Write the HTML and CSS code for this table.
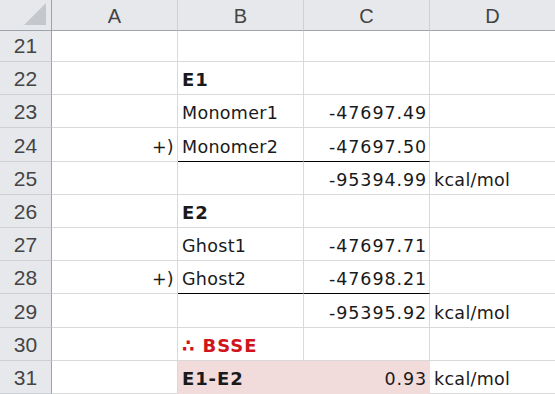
FILE: index.html
```html
<!DOCTYPE html>
<html>
<head>
<meta charset="utf-8">
<link rel="stylesheet" href="styles.css">
</head>
<body>
<div class="sheet">
  <div class="corner"><span class="tri"></span></div>
  <div class="colh">A</div>
  <div class="colh">B</div>
  <div class="colh">C</div>
  <div class="colh">D</div>

  <div class="rowh">21</div><div class="c"></div><div class="c"></div><div class="c"></div><div class="c"></div>

  <div class="rowh">22</div><div class="c"></div><div class="c b">E1</div><div class="c"></div><div class="c"></div>

  <div class="rowh">23</div><div class="c"></div><div class="c">Monomer1</div><div class="c r num">-47697.49</div><div class="c"></div>

  <div class="rowh">24</div><div class="c r">+)</div><div class="c ul">Monomer2</div><div class="c r num ul">-47697.50</div><div class="c"></div>

  <div class="rowh">25</div><div class="c"></div><div class="c"></div><div class="c r num">-95394.99</div><div class="c">kcal/mol</div>

  <div class="rowh">26</div><div class="c"></div><div class="c b">E2</div><div class="c"></div><div class="c"></div>

  <div class="rowh">27</div><div class="c"></div><div class="c">Ghost1</div><div class="c r num">-47697.71</div><div class="c"></div>

  <div class="rowh">28</div><div class="c r">+)</div><div class="c ul">Ghost2</div><div class="c r num ul">-47698.21</div><div class="c"></div>

  <div class="rowh">29</div><div class="c"></div><div class="c"></div><div class="c r num">-95395.92</div><div class="c">kcal/mol</div>

  <div class="rowh">30</div><div class="c"></div><div class="c b red">∴ BSSE</div><div class="c"></div><div class="c"></div>

  <div class="rowh">31</div><div class="c"></div><div class="c b fill">E1-E2</div><div class="c r num fill">0.93</div><div class="c">kcal/mol</div>
</div>
</body>
</html>
```
FILE: styles.css
```css
html, body {
  margin: 0;
  padding: 0;
  background: #ffffff;
  overflow: hidden;
}
.sheet {
  width: 555px;
  height: 394px;
  overflow: hidden;
  display: grid;
  grid-template-columns: 52px 126px 126px 126px 126px;
  grid-template-rows: 31px 31px repeat(10, 33.2px);
  font-family: "DejaVu Sans", Verdana, sans-serif;
  font-size: 17.5px;
  letter-spacing: 0.3px;
  color: #1a1a1a;
}
.corner {
  background: #e6e8eb;
  border-right: 1px solid #9fa4aa;
  border-bottom: 1px solid #9fa4aa;
  box-sizing: border-box;
  display: flex;
  align-items: flex-end;
  justify-content: flex-end;
  padding: 0 5px 5px 0;
}
.tri {
  width: 0;
  height: 0;
  border-left: 22px solid transparent;
  border-bottom: 22px solid #c4c7cb;
}
.colh {
  background: #e6e8eb;
  border-right: 1px solid #cdd0d4;
  border-bottom: 1px solid #9fa4aa;
  box-sizing: border-box;
  display: flex;
  align-items: center;
  justify-content: center;
  font-family: "Liberation Sans", Arial, sans-serif;
  font-size: 20px;
  letter-spacing: 0;
  color: #444444;
  padding-top: 2px;
}
.rowh {
  background: #e6e8eb;
  border-right: 1px solid #9fa4aa;
  border-bottom: 1px solid #cdd0d4;
  box-sizing: border-box;
  display: flex;
  align-items: flex-end;
  justify-content: center;
  font-family: "Liberation Sans", Arial, sans-serif;
  font-size: 21px;
  letter-spacing: 0;
  color: #444444;
  padding-bottom: 3px;
}
.c {
  border-right: 1px solid #d9d9d9;
  border-bottom: 1px solid #d9d9d9;
  box-sizing: border-box;
  display: flex;
  align-items: flex-end;
  padding: 0 3px 4px 4px;
  white-space: nowrap;
}
.r {
  justify-content: flex-end;
}
.num {
  letter-spacing: 0.9px;
  padding-right: 2px;
}
.b {
  font-weight: bold;
  font-size: 18px;
  letter-spacing: 0.9px;
}
.red {
  color: #d0141b;
}
.ul {
  border-bottom: 1px solid #000000;
}
.fill {
  background: #f2dcdb;
  border-right-color: #f2dcdb;
  border-bottom-color: #f2dcdb;
}
```
